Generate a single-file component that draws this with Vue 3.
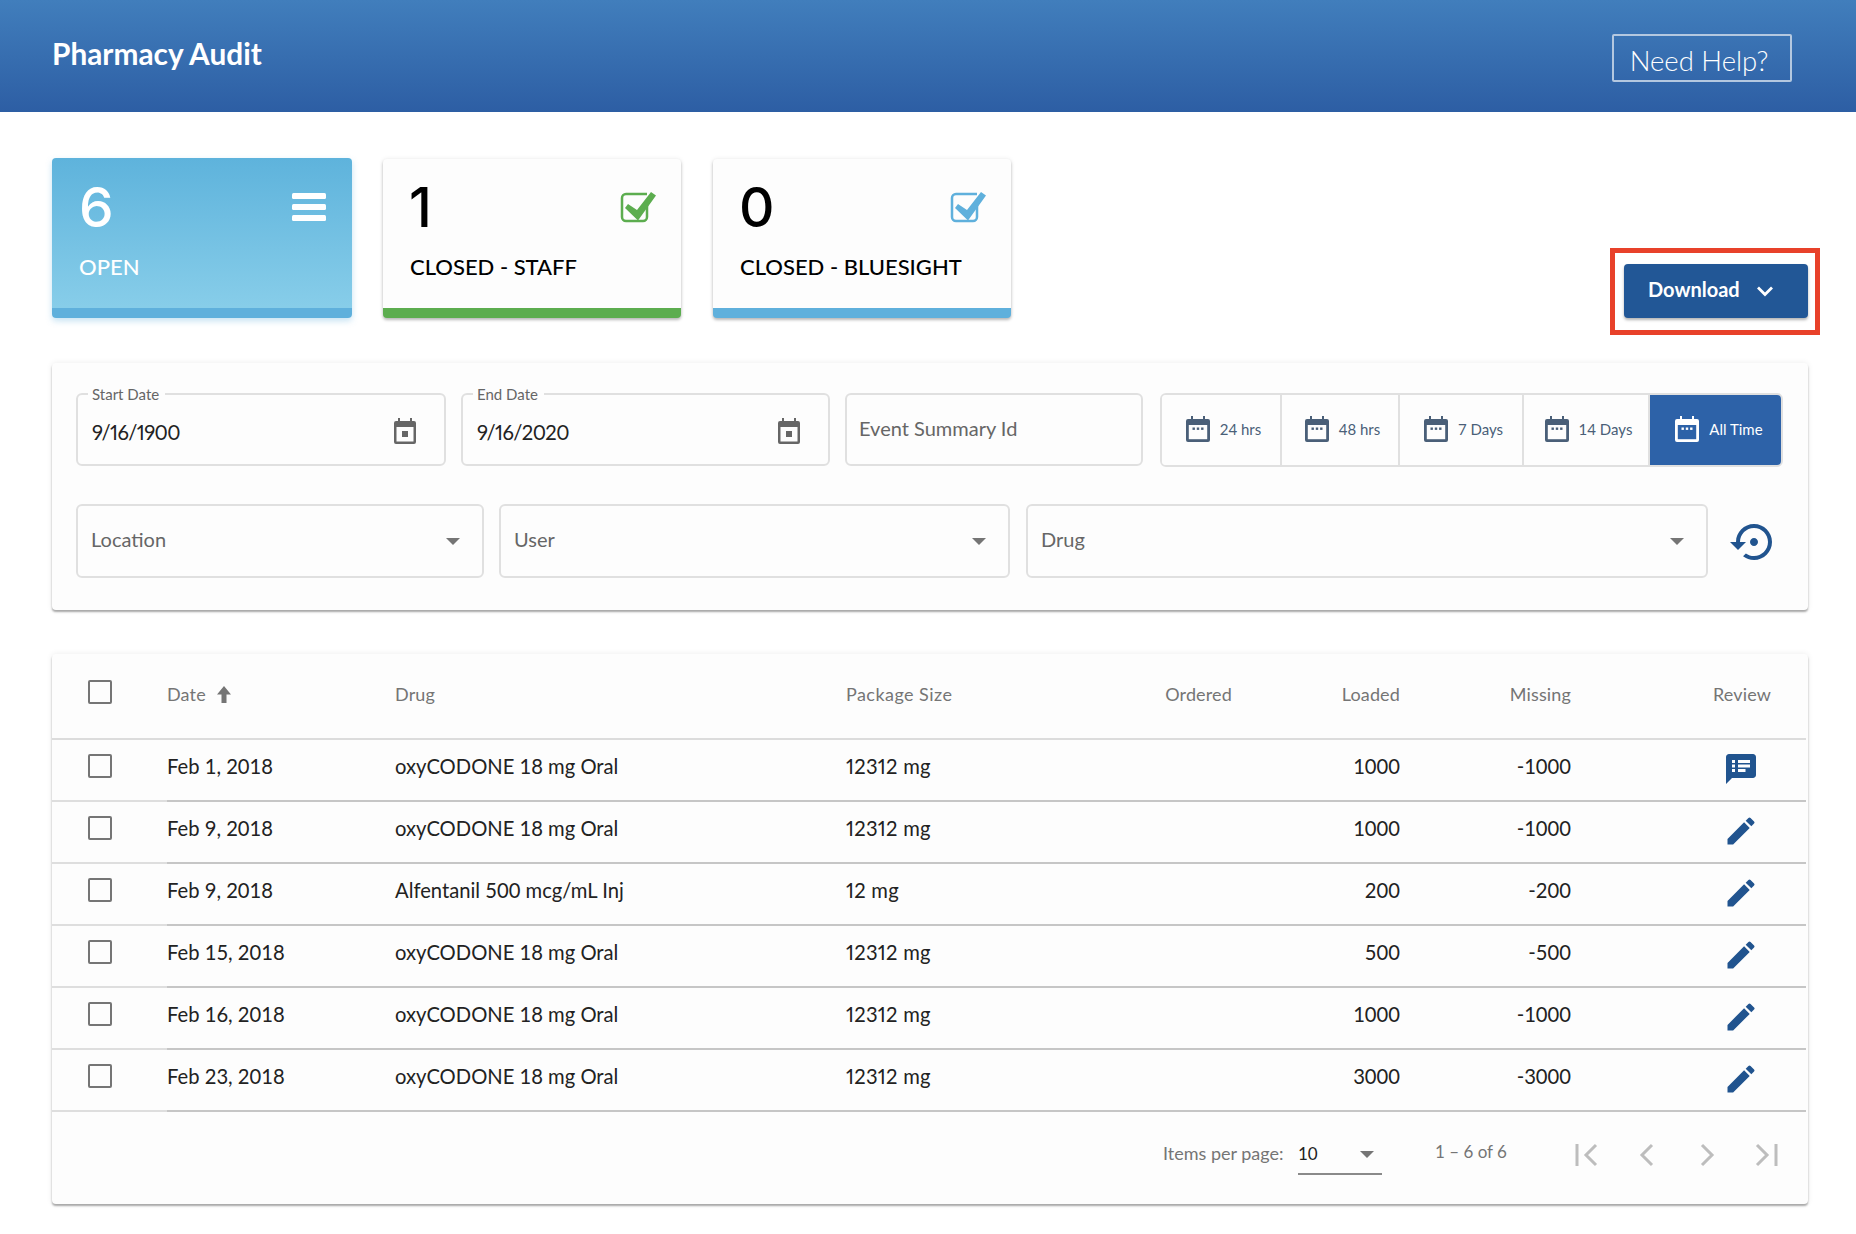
<script setup>
const rows = [
  { date: 'Feb 1, 2018', drug: 'oxyCODONE 18 mg Oral', size: '12312 mg', loaded: '1000', missing: '-1000', review: true },
  { date: 'Feb 9, 2018', drug: 'oxyCODONE 18 mg Oral', size: '12312 mg', loaded: '1000', missing: '-1000' },
  { date: 'Feb 9, 2018', drug: 'Alfentanil 500 mcg/mL Inj', size: '12 mg', loaded: '200', missing: '-200' },
  { date: 'Feb 15, 2018', drug: 'oxyCODONE 18 mg Oral', size: '12312 mg', loaded: '500', missing: '-500' },
  { date: 'Feb 16, 2018', drug: 'oxyCODONE 18 mg Oral', size: '12312 mg', loaded: '1000', missing: '-1000' },
  { date: 'Feb 23, 2018', drug: 'oxyCODONE 18 mg Oral', size: '12312 mg', loaded: '3000', missing: '-3000' }
]
const quick = [
  { label: '24 hrs', width: 120 },
  { label: '48 hrs', width: 118 },
  { label: '7 Days', width: 124 },
  { label: '14 Days', width: 126 },
  { label: 'All Time', width: 131, active: true }
]
</script>

<template>
  <div class="page">
    <header class="topbar">
      <h1 class="title">Pharmacy Audit</h1>
      <button class="help">Need Help?</button>
    </header>

    <main class="content">
      <section class="summary">
        <div class="tiles">
          <div class="tile open">
            <div class="tile-top">
              <span class="num">6</span>
              <svg class="burger" width="34" height="28" viewBox="0 0 34 28" fill="#fff">
                <rect y="0" width="34" height="6" rx="1.5" />
                <rect y="11" width="34" height="6" rx="1.5" />
                <rect y="22" width="34" height="6" rx="1.5" />
              </svg>
            </div>
            <div class="tile-label">OPEN</div>
          </div>
          <div class="tile staff">
            <div class="tile-top">
              <span class="num">1</span>
              <svg class="check" width="36" height="32" viewBox="0 0 36 32" fill="none">
                <path d="M27 12v14a4 4 0 0 1-4 4H6a4 4 0 0 1-4-4V7a4 4 0 0 1 4-4h21" stroke="#5cad4f" stroke-width="2.5" />
                <path d="M8 13l9 6L31 1l5 3.500-18 25L5 17z" fill="#5cad4f" />
              </svg>
            </div>
            <div class="tile-label">CLOSED - STAFF</div>
          </div>
          <div class="tile blue">
            <div class="tile-top">
              <span class="num">0</span>
              <svg class="check" width="36" height="32" viewBox="0 0 36 32" fill="none">
                <path d="M27 12v14a4 4 0 0 1-4 4H6a4 4 0 0 1-4-4V7a4 4 0 0 1 4-4h21" stroke="#5fb0dc" stroke-width="2.5" />
                <path d="M8 13l9 6L31 1l5 3.500-18 25L5 17z" fill="#5fb0dc" />
              </svg>
            </div>
            <div class="tile-label">CLOSED - BLUESIGHT</div>
          </div>
        </div>
        <div class="dl-frame">
          <button class="download">
            <span class="dl-text">Download</span>
            <svg width="18" height="12" viewBox="0 0 18 12" fill="none"><path d="M2 2.500l7 7 7-7" stroke="#fff" stroke-width="2.8" /></svg>
          </button>
        </div>
      </section>

      <section class="panel filters">
        <div class="filter-row first-row">
          <div class="field date start">
            <span class="legend">Start Date</span>
            <span class="value">9/16/1900</span>
            <svg width="22" height="26" viewBox="0 0 22 26" fill="none">
              <path d="M4 0h2v3h10V0h2v3h2a2 2 0 0 1 2 2v19a2 2 0 0 1-2 2H2a2 2 0 0 1-2-2V5a2 2 0 0 1 2-2h2z" fill="#666" />
              <rect x="2.500" y="9" width="17" height="14.500" fill="#fdfdfd" />
              <rect x="8" y="13" width="6" height="6" fill="#666" />
            </svg>
          </div>
          <div class="field date end">
            <span class="legend">End Date</span>
            <span class="value">9/16/2020</span>
            <svg width="22" height="26" viewBox="0 0 22 26" fill="none">
              <path d="M4 0h2v3h10V0h2v3h2a2 2 0 0 1 2 2v19a2 2 0 0 1-2 2H2a2 2 0 0 1-2-2V5a2 2 0 0 1 2-2h2z" fill="#666" />
              <rect x="2.500" y="9" width="17" height="14.500" fill="#fdfdfd" />
              <rect x="8" y="13" width="6" height="6" fill="#666" />
            </svg>
          </div>
          <div class="field event"><span class="placeholder">Event Summary Id</span></div>
          <div class="quick">
            <button
              v-for="q in quick"
              :key="q.label"
              class="quick-btn"
              :class="{ active: q.active }"
              :style="{ width: q.width + 'px' }"
            >
              <svg width="24" height="26" viewBox="0 0 24 26" fill="none">
                <path d="M5 0h2v3h10V0h2v3h3a2 2 0 0 1 2 2v19a2 2 0 0 1-2 2H2a2 2 0 0 1-2-2V5a2 2 0 0 1 2-2h3z" fill="currentColor" />
                <rect class="cal-inner" x="2.800" y="9" width="18.400" height="14.200" />
                <rect x="6.500" y="11.500" width="2.400" height="2.400" fill="currentColor" />
                <rect x="10.800" y="11.500" width="2.400" height="2.400" fill="currentColor" />
                <rect x="15.100" y="11.500" width="2.400" height="2.400" fill="currentColor" />
              </svg>
              <span>{{ q.label }}</span>
            </button>
          </div>
        </div>
        <div class="filter-row second">
          <div class="field select location"><span class="placeholder">Location</span><i class="caret"></i></div>
          <div class="field select user"><span class="placeholder">User</span><i class="caret"></i></div>
          <div class="field select drug"><span class="placeholder">Drug</span><i class="caret"></i></div>
          <svg class="reset" width="48" height="48" viewBox="0 0 24 24" fill="#21548f">
            <path d="M14 12c0-1.100-.9-2-2-2s-2 .9-2 2 .9 2 2 2 2-.9 2-2zm-2-9c-4.970 0-9 4.030-9 9H0l4 4 4-4H5c0-3.870 3.130-7 7-7s7 3.130 7 7-3.130 7-7 7c-1.510 0-2.910-.49-4.060-1.300l-1.420 1.440C8.040 20.300 9.940 21 12 21c4.970 0 9-4.030 9-9s-4.030-9-9-9z" />
          </svg>
        </div>
      </section>

      <section class="panel table-card">
        <div class="grid-row head">
          <div class="cell boxcell"><i class="box"></i></div>
          <div class="cell">
            Date
            <svg class="sort" width="14" height="17" viewBox="0 0 14 17" fill="#757575"><path d="M7 0l7 8.500H9.500V17h-5V8.500H0z" /></svg>
          </div>
          <div class="cell">Drug</div>
          <div class="cell wide">Package Size</div>
          <div class="cell num-cell">Ordered</div>
          <div class="cell num-cell">Loaded</div>
          <div class="cell num-cell">Missing</div>
          <div class="cell num-cell last">Review</div>
        </div>
        <div v-for="(r, i) in rows" :key="i" class="grid-row body">
          <div class="cell first"><i class="box"></i></div>
          <div class="cell">{{ r.date }}</div>
          <div class="cell">{{ r.drug }}</div>
          <div class="cell size">{{ r.size }}</div>
          <div class="cell num-cell"></div>
          <div class="cell num-cell">{{ r.loaded }}</div>
          <div class="cell num-cell">{{ r.missing }}</div>
          <div class="cell num-cell last action">
            <svg v-if="r.review" width="36" height="36" viewBox="0 0 24 24" fill="#21548f">
              <path d="M20 2H4c-1.100 0-1.990.9-1.990 2L2 22l4-4h14c1.100 0 2-.9 2-2V4c0-1.100-.9-2-2-2zM8 14H6v-2h2v2zm0-3H6V9h2v2zm0-3H6V6h2v2zm7 6h-5v-2h5v2zm3-3h-8V9h8v2zm0-3h-8V6h8v2z" />
            </svg>
            <svg v-else width="36" height="36" viewBox="0 0 24 24" fill="#21548f">
              <path d="M3 17.250V21h3.750L17.810 9.940l-3.750-3.750L3 17.250zM20.710 7.040a.996.996 0 0 0 0-1.410l-2.340-2.340a.996.996 0 0 0-1.410 0l-1.830 1.830 3.750 3.750 1.830-1.830z" />
            </svg>
          </div>
        </div>
        <footer class="pager">
          <span class="per-label">Items per page:</span>
          <div class="per-select"><span>10</span><i class="caret"></i></div>
          <span class="range">1 – 6 of 6</span>
          <div class="pager-icons">
            <svg width="24" height="24" viewBox="0 0 24 24" fill="none" stroke="#bdbdbd" stroke-width="3"><path d="M2 1v22M21 2L11 12l10 10" /></svg>
            <svg width="16" height="24" viewBox="0 0 16 24" fill="none" stroke="#bdbdbd" stroke-width="3"><path d="M14 2L4 12l10 10" /></svg>
            <svg width="16" height="24" viewBox="0 0 16 24" fill="none" stroke="#bdbdbd" stroke-width="3"><path d="M2 2l10 10L2 22" /></svg>
            <svg width="24" height="24" viewBox="0 0 24 24" fill="none" stroke="#bdbdbd" stroke-width="3"><path d="M22 1v22M3 2l10 10L3 22" /></svg>
          </div>
        </footer>
      </section>
    </main>
  </div>
</template>

<style>
html, body { margin: 0; background: #fff; }
</style>

<style scoped>
.page {
  width: 1856px;
  font-family: "Lato", "Liberation Sans", sans-serif;
  color: #222;
  font-size: 20.200px;
}
button { font-family: inherit; }
i { display: block; }

.topbar {
  height: 112px;
  box-sizing: border-box;
  padding: 34px 64px 0 52px;
  display: flex;
  justify-content: space-between;
  align-items: flex-start;
  background: linear-gradient(#417ebc, #2d5ea4);
}
.title {
  margin: 0;
  color: #fff;
  font-size: 29.800px;
  line-height: 40px;
  font-weight: 700;
}
.help {
  width: 180px;
  height: 48px;
  box-sizing: border-box;
  border: 2px solid #b4c8e0;
  border-radius: 2px;
  background: transparent;
  color: #fff;
  font-size: 27.500px;
  font-weight: 300;
  padding: 4px 6px 0 0;
}

.content { padding: 46px 48px 29px 52px; }

.summary {
  display: flex;
  justify-content: space-between;
  align-items: flex-start;
  height: 205px;
}
.tiles { display: flex; gap: 31px; align-items: flex-start; }
.tile {
  width: 298px;
  height: 159px;
  margin-top: 1px;
  box-sizing: border-box;
  border-radius: 4px;
  background: #fdfdfd;
  padding: 18px 25px 0 27px;
  box-shadow: 0 2px 3px rgba(0, 0, 0, .25), 0 0 5px rgba(0, 0, 0, .08);
  border-bottom: 10px solid;
  color: #000;
}
.tile.open {
  width: 300px;
  height: 160px;
  margin-top: 0;
  padding: 19px 26px 0 28px;
  background: linear-gradient(#5eb3dc, #8acfea);
  background-origin: border-box;
  border-bottom-color: #5fb0dc;
  color: #fff;
  box-shadow: 0 3px 6px rgba(95, 176, 220, .35);
}
.tile.staff { border-bottom-color: #5cad4f; }
.tile.blue { border-bottom-color: #5fb0dc; margin-left: 1px; }
.tile-top {
  display: flex;
  justify-content: space-between;
  align-items: center;
  height: 60px;
}
.num { font-family: "Inter", "Lato", sans-serif; font-size: 55px; line-height: 60px; font-weight: 500; margin-left: -1px; }
.tile-label { margin-top: 17px; font-size: 22px; line-height: 26px; font-weight: 500; }
.tile.open .tile-label { margin-left: -1px; }

.dl-frame {
  margin-top: 90px;
  border: 5px solid #e8412a;
  padding: 11px 7px 12px 9px;
  margin-right: -12px;
  line-height: 0;
}
.download {
  width: 184px;
  height: 54px;
  border: 0;
  border-radius: 4px;
  background: #225796;
  color: #fff;
  font-size: 20px;
  font-weight: 700;
  display: flex;
  align-items: center;
  gap: 16px;
  padding: 0 0 0 24px;
  box-shadow: 0 2px 3px rgba(0, 0, 0, .3);
}
.dl-text { margin-top: -4px; }

.panel {
  width: 1756px;
  background: #fdfdfd;
  border-radius: 4px;
  box-shadow: 0 2px 2px rgba(0, 0, 0, .32), 0 0 6px rgba(0, 0, 0, .08);
}
.filters {
  box-sizing: border-box;
  height: 247px;
  padding: 30px 0 0 24px;
}
.filter-row { display: flex; gap: 15px; align-items: flex-start; }
.filter-row.second { margin-top: 37px; }
.field {
  position: relative;
  height: 73px;
  box-sizing: border-box;
  border: 2px solid #e0e0e0;
  border-radius: 6px;
  display: flex;
  align-items: center;
  justify-content: space-between;
  padding: 0 22px 0 13px;
}
.second .field { height: 74px; }
.date { padding-top: 5px; padding-right: 28px; padding-left: 14px; }
.date.start { width: 370px; }
.date.end { width: 369px; }
.date svg { margin-top: -3px; }
.value { font-variant-numeric: proportional-nums; letter-spacing: -.6px; }
.event { width: 298px; padding-left: 12px; }
.location { width: 408px; }
.user { width: 511px; }
.drug { width: 682px; margin-left: 1px; }
.legend {
  position: absolute;
  left: 10px;
  top: -11px;
  padding: 0 6px 0 4px;
  background: #fdfdfd;
  color: #666;
  font-size: 15px;
  line-height: 20px;
}
.placeholder { color: #666; font-size: 20px; margin-top: -4px; }
.caret {
  width: 0;
  height: 0;
  border-left: 7px solid transparent;
  border-right: 7px solid transparent;
  border-top: 7px solid #757575;
}
.quick {
  display: flex;
  height: 74px;
  box-sizing: border-box;
  margin-left: 2px;
  border: 2px solid #e0e0e0;
  border-radius: 6px;
  overflow: hidden;
}
.quick-btn {
  display: flex;
  align-items: center;
  justify-content: center;
  gap: 10px;
  border: 0;
  border-right: 2px solid #e0e0e0;
  background: #fdfdfd;
  color: #4a5f78;
  font-size: 15px;
  padding: 0 0 2px 5px;
  flex: none;
}
.cal-inner { fill: #fdfdfd; }
.quick-btn.active { background: #2d62a8; color: #fff; border-right: 0; padding-left: 7px; }
.quick-btn.active .cal-inner { fill: #2d62a8; }
.reset { margin: 14px 0 0 7px; }

.table-card { margin-top: 44px; }
.grid-row {
  display: grid;
  grid-template-columns: 115px 228px 451px 254px 132px 168px 171px 235px;
  width: 1754px;
}
.cell {
  display: flex;
  align-items: center;
  border-bottom: 2px solid #c6c6c6;
  padding-bottom: 9px;
  box-sizing: border-box;
}
.last { padding-right: 35px; }
.head .cell {
  height: 86px;
  font-size: 18px;
  letter-spacing: .15px;
  color: #757575;
  border-bottom-color: #dcdcdc;
  padding-bottom: 4px;
}
.head .boxcell { padding-bottom: 8px; }
.head .wide { letter-spacing: .45px; }
.body .cell { height: 62px; }
.body .first { border-bottom-color: #dedede; }
.size { font-variant-numeric: proportional-nums; letter-spacing: .25px; }
.num-cell { justify-content: flex-end; }
.box {
  width: 24px;
  height: 24px;
  box-sizing: border-box;
  margin-left: 36px;
  border: 2px solid #757575;
  border-radius: 2px;
}
.sort { margin-left: 11px; margin-top: 1px; }
.body .action { padding-bottom: 2px; }
.action svg { margin-right: 12px; }

.pager {
  height: 92px;
  box-sizing: border-box;
  padding: 27px 0 0 1111px;
  display: flex;
  align-items: flex-start;
  color: #757575;
  font-size: 18px;
}
.per-label { width: 135px; margin-top: 3px; }
.per-select {
  width: 84px;
  height: 36px;
  box-sizing: border-box;
  border-bottom: 2px solid #8a8a8a;
  display: flex;
  align-items: center;
  justify-content: space-between;
  padding: 0 0 6px;
  color: #222;
  font-size: 17px;
}
.per-select .caret { margin-right: 8px; margin-top: 3px; }
.range { margin: 2px 0 0 53px; width: 67px; white-space: nowrap; font-size: 17px; }
.pager-icons { display: flex; align-items: center; margin: 4px 0 0 73px; }
.pager-icons svg:nth-child(2) { margin-left: 39px; }
.pager-icons svg:nth-child(3) { margin-left: 46px; }
.pager-icons svg:nth-child(4) { margin-left: 38px; }
</style>
